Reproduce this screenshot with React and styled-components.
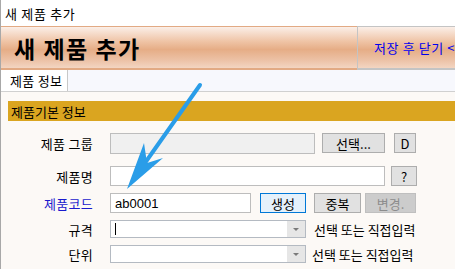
import React from "react";
import styled, { createGlobalStyle } from "styled-components";

const GlobalStyle = createGlobalStyle`
  html, body { margin: 0; padding: 0; background: #ffffff; }
  body { font-family: "Noto Sans CJK KR", "Noto Sans", sans-serif; font-size: 13px; }
`;

const Page = styled.div`
  position: relative;
  width: 455px;
  height: 269px;
  overflow: hidden;
  border-left: 1px solid #a8a8a8;
  box-sizing: border-box;
  background: #fcf9f6;
`;

const TitleBar = styled.div`
  height: 26px;
  background: #ffffff;
  display: flex;
  align-items: center;
  padding-left: 4px;
  font-size: 13px;
  letter-spacing: 0.7px;
  color: #000;
  line-height: 1;
`;

const headerGradient = `linear-gradient(#fbefe8 0%, #efc4a6 35%, #e6ad86 55%, #ecc1a5 80%, #f3d5c2 100%)`;

const Header = styled.div`
  display: flex;
  height: 44px;
  overflow: hidden;
`;

const HeaderTitle = styled.div`
  flex: 0 0 356px;
  display: flex;
  align-items: center;
  padding-left: 13px;
  box-sizing: border-box;
  background: ${headerGradient};
  border-top: 1px solid #e2aa84;
  border-bottom: 2px solid #e2aa84;
  font-size: 23px;
  font-weight: 700;
  color: #000;
  letter-spacing: 1.5px;
`;

const SaveButton = styled.div`
  flex: 0 0 130px;
  display: flex;
  align-items: center;
  padding-left: 16px;
  box-sizing: border-box;
  background: ${headerGradient};
  border: 1px solid #c4c4c4;
  border-bottom-width: 2px;
  color: #0000ee;
  font-size: 13px;
  letter-spacing: 0.6px;
  white-space: nowrap;
`;

const TabBar = styled.div`
  display: flex;
  height: 21px;
  background: #f7f8fd;
  border-bottom: 1px solid #d0d0d0;
`;

const Tab = styled.div`
  width: 67px;
  background: #ffffff;
  border-right: 1px solid #c8c8c8;
  display: flex;
  align-items: center;
  padding-left: 9px;
  box-sizing: border-box;
  font-size: 13px;
  letter-spacing: 0.3px;
`;

const Content = styled.div`
  padding: 9px 0 0 7px;
`;

const Section = styled.div`
  height: 20px;
  background: #daa520;
  display: flex;
  align-items: center;
  padding-left: 3px;
  font-size: 13px;
  color: #000;
`;

const Row = styled.div`
  display: flex;
  align-items: center;
  margin-top: ${(p) => p.$gap}px;
  height: ${(p) => p.$h || 20}px;
`;

const Label = styled.div`
  width: 85px;
  text-align: right;
  margin-right: 17px;
  font-size: 13px;
  letter-spacing: 0.3px;
  color: ${(p) => (p.$blue ? "#1a1acd" : "#000")};
  white-space: nowrap;
`;

const Field = styled.div`
  width: ${(p) => p.$w}px;
  height: 100%;
  box-sizing: border-box;
  border: 1px solid #bdbdbd;
  background: ${(p) => (p.$disabled ? "#f0f0f0" : "#ffffff")};
  display: flex;
  align-items: center;
  padding-left: 4px;
  font-size: 13px;
  font-family: "Liberation Sans", "Noto Sans CJK KR", sans-serif;
`;

const Caret = styled.span`
  width: 1px;
  height: 12px;
  background: #000;
`;

const Button = styled.div`
  width: ${(p) => p.$w}px;
  height: ${(p) => p.$h || 20}px;
  margin-left: ${(p) => p.$ml}px;
  box-sizing: border-box;
  border: 1px solid ${(p) => (p.$primary ? "#0078d7" : p.$disabled ? "#bfbfbf" : "#adadad")};
  background: ${(p) => (p.$primary ? "#e5f1fb" : p.$disabled ? "#cccccc" : "#e1e1e1")};
  color: ${(p) => (p.$disabled ? "#8c8c8c" : "#000")};
  display: flex;
  align-items: center;
  justify-content: center;
  font-size: 13px;
  align-self: flex-start;
`;

const Combo = styled.div`
  width: 196px;
  height: 100%;
  box-sizing: border-box;
  border: 1px solid #b4bac2;
  background: #ffffff;
  display: flex;
  align-items: center;
  padding-left: 4px;
`;

const ComboText = styled.div`
  flex: 1;
  display: flex;
  align-items: center;
`;

const DropButton = styled.div`
  width: 18px;
  height: 100%;
  background: #e6e6e6;
  display: flex;
  align-items: center;
  justify-content: center;
  &::after {
    content: "";
    border-left: 3px solid transparent;
    border-right: 3px solid transparent;
    border-top: 3px solid #7a7a7a;
  }
`;

const Hint = styled.div`
  margin-left: ${(p) => p.$ml}px;
  font-size: 13px;
  white-space: nowrap;
`;

const Arrow = styled.svg`
  position: absolute;
  left: 0;
  top: 0;
  pointer-events: none;
`;

export default function App() {
  return (
    <>
      <GlobalStyle />
      <Page>
        <TitleBar>새 제품 추가</TitleBar>
        <Header>
          <HeaderTitle>새 제품 추가</HeaderTitle>
          <SaveButton>저장 후 닫기 &lt;&lt;</SaveButton>
        </Header>
        <TabBar>
          <Tab>제품 정보</Tab>
        </TabBar>
        <Content>
          <Section>제품기본 정보</Section>
          <Row $gap={12} $h={21}>
            <Label>제품 그룹</Label>
            <Field $w={205} $disabled />
            <Button $w={63} $ml={7}>선택...</Button>
            <Button $w={22} $ml={9}>D</Button>
          </Row>
          <Row $gap={12}>
            <Label>제품명</Label>
            <Field $w={275} />
            <Button $w={26} $ml={6}>?</Button>
          </Row>
          <Row $gap={7}>
            <Label $blue>제품코드</Label>
            <Field $w={141}>ab0001</Field>
            <Button $w={46} $ml={9} $primary>생성</Button>
            <Button $w={47} $ml={8}>중복</Button>
            <Button $w={51} $ml={4} $disabled>변경.</Button>
          </Row>
          <Row $gap={7} $h={18}>
            <Label>규격</Label>
            <Combo>
              <ComboText><Caret /></ComboText>
              <DropButton />
            </Combo>
            <Hint $ml={8}>선택 또는 직접입력</Hint>
          </Row>
          <Row $gap={7} $h={18}>
            <Label>단위</Label>
            <Combo>
              <ComboText />
              <DropButton />
            </Combo>
            <Hint $ml={6}>선택 또는 직접입력</Hint>
          </Row>
        </Content>
        <Arrow width="455" height="269" viewBox="0 0 455 269">
          <line x1="199" y1="85" x2="139" y2="170" stroke="#2a9de8" strokeWidth="4" strokeLinecap="round" />
          <polygon points="126,189 143,143 146,163 162,158" fill="#2a9de8" />
        </Arrow>
      </Page>
    </>
  );
}
